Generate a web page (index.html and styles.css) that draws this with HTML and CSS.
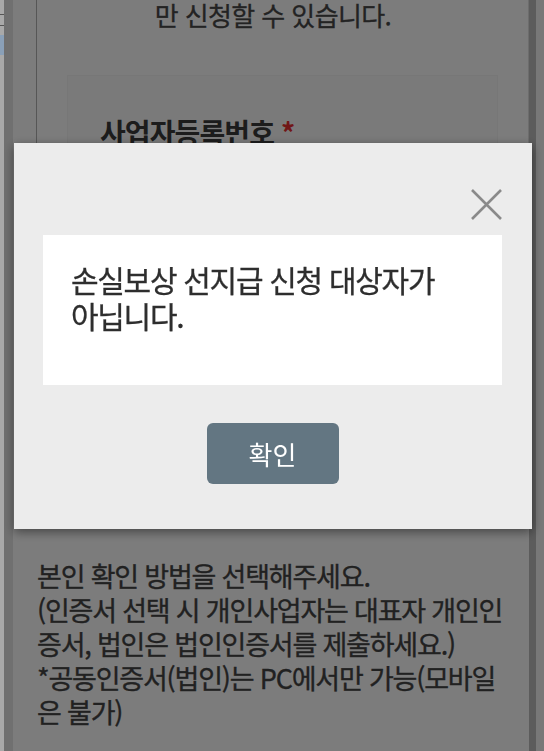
FILE: index.html
```html
<!DOCTYPE html>
<html lang="ko">
<head>
<meta charset="utf-8">
<title>손실보상 선지급 신청</title>
<link rel="stylesheet" href="styles.css">
</head>
<body>
<div class="screen">
  <div class="rail"><span class="tick t1"></span><span class="tick t2"></span><span class="tick t3"></span></div>
  <div class="gutter"></div>
  <div class="spacer"></div>
  <main class="content">
    <section class="notice-card">
      <p class="lead">만 신청할 수 있습니다.</p>
      <div class="field-box">
        <h3 class="field-label">사업자등록번호 <span class="req">*</span></h3>
      </div>
    </section>
    <p class="guide">본인 확인 방법을 선택해주세요.<br>(인증서 선택 시 개인사업자는 대표자 개인인증서, 법인은 법인인증서를 제출하세요.)<br>*공동인증서(법인)는 PC에서만 가능(모바일은 불가)</p>
  </main>
  <div class="scrollbar"></div>
  <div class="edge"></div>
</div>
<div class="overlay"></div>
<div class="modal" role="dialog">
  <div class="modal-head">
    <button class="close" aria-label="닫기">
      <svg width="33" height="33" viewBox="0 0 33 33"><path d="M2 2 L31 31 M31 2 L2 31" stroke="#8a8a8a" stroke-width="2.6" fill="none"/></svg>
    </button>
  </div>
  <div class="modal-body">
    <p class="message">손실보상 선지급 신청 대상자가 아닙니다.</p>
  </div>
  <div class="modal-foot">
    <button class="confirm">확인</button>
  </div>
</div>
</body>
</html>
```
FILE: styles.css
```css
html, body {
  margin: 0;
  padding: 0;
  height: 751px;
  overflow: hidden;
  background: #fff;
  font-family: "Noto Sans CJK KR", "Noto Sans", sans-serif;
}
.screen {
  display: flex;
  height: 751px;
}
.rail {
  width: 4px;
  background: #a9a9a9;
  position: relative;
  z-index: 20;
}
.tick {
  position: absolute;
  left: 0;
  width: 4px;
  height: 1px;
  background: #555;
}
.t1 { top: 14px; }
.t2 { top: 25px; }
.t3 { top: 35px; background: #8aa0b8; height: 20px; }
.gutter {
  width: 9px;
  background: #e6e6e6;
}
.spacer {
  width: 23px;
  background: #fff;
}
.content {
  flex: 1;
  min-width: 0;
}
.notice-card {
  border-left: 1px solid #b2b2b2;
  border-right: 1px solid #e0e0e0;
  padding: 0 0 22px;
}
.lead {
  margin: 0;
  padding-right: 19px;
  text-align: center;
  font-size: 26px;
  line-height: 30px;
  letter-spacing: -0.6px;
  color: #484848;
  -webkit-text-stroke: 0.3px #484848;
}
.field-box {
  margin: 45px 30px 0;
  height: 430px;
  background: #fbfbfb;
  border: 1px solid #f4f4f4;
  padding: 36px 32px 0;
  box-sizing: border-box;
}
.field-label {
  margin: 0;
  font-size: 28px;
  font-weight: 700;
  letter-spacing: -0.9px;
  color: #3a3a3a;
}
.req { color: #e83030; }
.guide {
  margin: 32px 0 0;
  padding: 0 14px 0 1px;
  font-size: 27px;
  line-height: 34px;
  letter-spacing: -1.2px;
  color: #444;
  -webkit-text-stroke: 0.35px #444;
}
.scrollbar {
  width: 7px;
  background: #bdbdbd;
}
.edge {
  width: 8px;
  background: #f6f6f6;
}
.overlay {
  position: fixed;
  top: 0;
  left: 4px;
  right: 0;
  bottom: 0;
  background: rgba(0, 0, 0, 0.515);
  z-index: 5;
}
.modal {
  position: fixed;
  left: 14px;
  top: 143px;
  width: 518px;
  height: 386px;
  background: #ececec;
  box-shadow: 0 3px 10px rgba(0, 0, 0, 0.45);
  z-index: 10;
  display: flex;
  flex-direction: column;
  padding: 0 30px 0 29px;
  box-sizing: border-box;
}
.modal-head {
  height: 92px;
  display: flex;
  justify-content: flex-end;
  align-items: flex-start;
  padding-top: 45px;
  box-sizing: border-box;
}
.close {
  border: 0;
  background: none;
  padding: 0;
  width: 33px;
  height: 33px;
  margin-right: -1px;
}
.close svg { display: block; }
.modal-body {
  background: #fff;
  height: 150px;
  padding: 26px 28px 0;
  box-sizing: border-box;
}
.message {
  margin: 0;
  font-size: 30px;
  line-height: 36px;
  letter-spacing: -1.3px;
  color: #2e2e2e;
  -webkit-text-stroke: 0.3px #2e2e2e;
  padding-right: 20px;
}
.modal-foot {
  display: flex;
  justify-content: center;
  padding-top: 38px;
}
.confirm {
  width: 132px;
  height: 61px;
  border: 0;
  border-radius: 6px;
  background: #637682;
  color: #fff;
  font-family: "Noto Sans CJK KR", "Noto Sans", sans-serif;
  font-size: 26px;
  padding: 0;
}
```
